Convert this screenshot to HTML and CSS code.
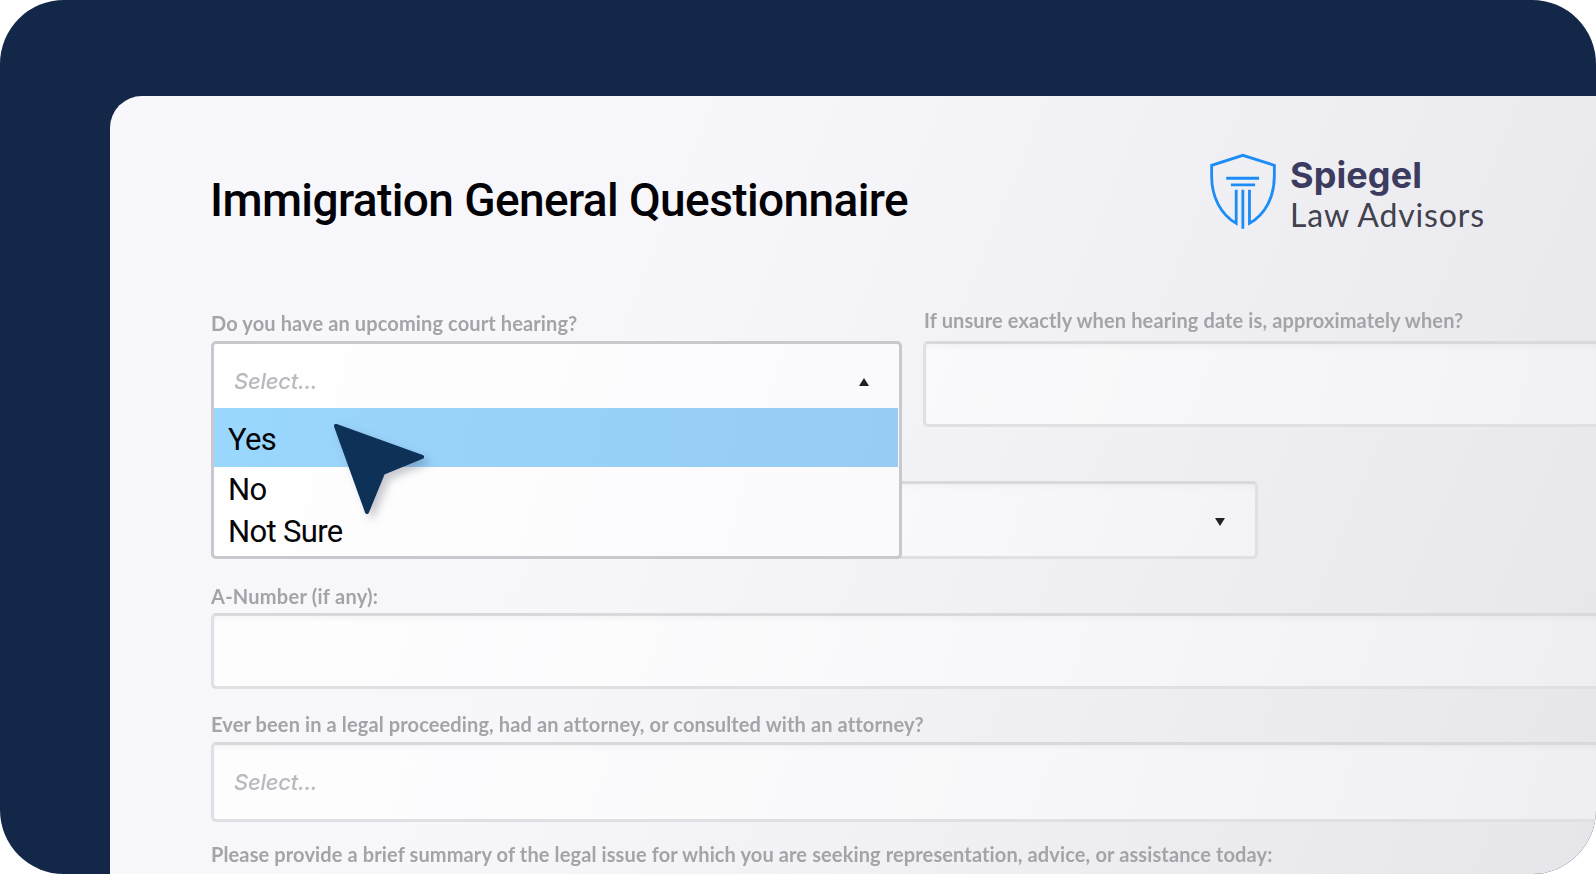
FILE: index.html
```
<!DOCTYPE html>
<html lang="en">
<head>
    <meta charset="UTF-8">
    <meta name="viewport" content="width=device-width, initial-scale=1.0">
    <title>Immigration General Questionnaire</title>
    <link rel="stylesheet" href="styles.css">
</head>
<body>

    <div class="frame">
        <div class="card">
            <div class="header">
                <h1>Immigration General Questionnaire</h1>
                <div class="logo">
                    <svg class="shield" viewBox="80 60 220 250" fill="none" stroke="#1c8df5" stroke-width="8.5">
                        <path d="M168 180V281C122 255 94 202 94 138V106L188 76L283 106V138C283 202 255 255 208 281V180"/>
                        <path d="M188 180V297M138 145H237M152 165H225"/>
                    </svg>
                    <div class="logo-text">
                        <div class="logo-name">Spiegel</div>
                        <div class="logo-sub">Law Advisors</div>
                    </div>
                </div>
            </div>

            <div class="form">
                <div class="row">
                    <div class="group hearing">
                        <div class="label">Do you have an upcoming court hearing?</div>
                        <div class="select open">
                            <span class="placeholder">Select...</span>
                            <svg class="arrow" viewBox="0 0 10 8"><path d="M5 0L10 8H0Z"/></svg>
                            <div class="menu">
                                <div class="option active">Yes</div>
                                <div class="option">No</div>
                                <div class="option">Not Sure</div>
                            </div>
                            <svg class="cursor" viewBox="0 0 100 100">
                                <path d="M2 2L88 33L49 49L33 88Z" fill="#0e3158" stroke="#0e3158" stroke-width="4" stroke-linejoin="round"/>
                            </svg>
                        </div>
                    </div>
                    <div class="group date">
                        <div class="label">If unsure exactly when hearing date is, approximately when?</div>
                        <div class="input"></div>
                    </div>
                </div>

                <div class="select second">
                    <svg class="arrow" viewBox="0 0 10 8"><path d="M0 0H10L5 8Z"/></svg>
                </div>

                <div class="group number">
                    <div class="label">A-Number (if any):</div>
                    <div class="input"></div>
                </div>

                <div class="group attorney">
                    <div class="label">Ever been in a legal proceeding, had an attorney, or consulted with an attorney?</div>
                    <div class="input"><span class="placeholder">Select...</span></div>
                </div>

                <div class="group summary">
                    <div class="label">Please provide a brief summary of the legal issue for which you are seeking representation, advice, or assistance today:</div>
                </div>
            </div>
        </div>
    </div>

</body>
</html>
```
FILE: styles.css
```
* {
    box-sizing: border-box;
}

body {
    margin: 0;
    background: white;
    font-family: Roboto, sans-serif;
    overflow: hidden;
}

.frame {
    width: 1596px;
    height: 874px;
    padding: 96px 0 0 110px;
    background: #132749;
    clip-path: inset(0 round 64px);
}

.card {
    height: 778px;
    padding-left: 101px;
    background: linear-gradient(112deg, #f8f8fc 0%, #f7f7fb 35%, #f1f1f5 60%, #ebebef 82%, #e6e5ea 100%);
    border-top-left-radius: 32px;
    overflow: hidden;
}

.header {
    display: flex;
    height: 210px;
    padding-top: 54px;
}
.header h1 {
    width: 996px;
    margin: 23px 0 0 -1px;
    font-size: 46px;
    font-weight: 500;
    line-height: 54px;
    letter-spacing: -0.6px;
    color: #020206;
    white-space: nowrap;
}

.logo {
    display: flex;
    margin-left: 1px;
}
.shield {
    width: 73px;
    height: 83px;
}
.logo-text {
    padding-left: 10px;
    font-family: Lato, sans-serif;
    color: #3c3b60;
    white-space: nowrap;
}
.logo-name {
    height: 42px;
    font-family: Inter, sans-serif;
    font-size: 36px;
    font-weight: 700;
    line-height: 51px;
    letter-spacing: 0.1px;
}
.logo-sub {
    font-size: 32px;
    line-height: 46px;
    letter-spacing: 0.85px;
    color: #42424f;
}

.row {
    display: flex;
    gap: 21px;
    height: 175px;
}
.hearing {
    width: 691px;
    flex: none;
}
.date {
    flex: 1;
}

.label {
    height: 35px;
    font-family: Lato, sans-serif;
    font-size: 20px;
    font-weight: 700;
    line-height: 35px;
    letter-spacing: 0.12px;
    color: #a3a3a8;
    white-space: nowrap;
    filter: blur(0.6px);
}
.date .label {
    padding-left: 1px;
    line-height: 29px;
}
.number .label {
    line-height: 37px;
    letter-spacing: 0.25px;
}

.input,
.select {
    display: flex;
    align-items: center;
    border: 3px solid #dfdfe4;
    border-top-color: #d8d8dd;
    border-radius: 5px;
    background: linear-gradient(105deg, rgba(255, 255, 255, 0.75), rgba(255, 255, 255, 0.35));
    box-shadow: inset 0 4px 6px -3px rgba(90, 90, 110, 0.08);
}
.input {
    border-right: none;
    border-radius: 5px 0 0 5px;
}
.date .input {
    background: linear-gradient(105deg, rgba(255, 255, 255, 0.6), rgba(255, 255, 255, 0.4));
}

.placeholder {
    padding-left: 20px;
    font-family: Inter, sans-serif;
    font-size: 22px;
    font-weight: 500;
    font-style: italic;
    letter-spacing: -0.25px;
    color: #b9b9be;
    filter: blur(0.5px);
}
.arrow {
    width: 10px;
    height: 8px;
    margin-left: auto;
    fill: #222226;
}

.open {
    position: relative;
    height: 218px;
    padding: 0 30px 0 0;
    align-items: flex-start;
    border-color: #c8c8cd;
    background: linear-gradient(105deg, #ffffff, #faf9fc);
    box-shadow: none;
    z-index: 2;
}
.open .placeholder {
    line-height: 74px;
}
.open .arrow {
    margin-top: 34px;
}
.menu {
    position: absolute;
    top: 64px;
    left: 0;
    right: 1px;
}
.option {
    height: 42px;
    padding-left: 14px;
    font-size: 31px;
    line-height: 42px;
    letter-spacing: -0.65px;
    color: #050508;
}
.option.active {
    height: 59px;
    margin-bottom: 2px;
    line-height: 64px;
    background: linear-gradient(100deg, #99d8fc, #9ad2fa 30%, #97cdf5);
}
.cursor {
    position: absolute;
    left: 120px;
    top: 80px;
    width: 100px;
    height: 100px;
    overflow: visible;
    filter: drop-shadow(5px 5px 4px rgba(30, 40, 60, 0.25));
}

.date .input {
    height: 86px;
}
.second {
    width: 1047px;
    height: 78px;
    padding: 3px 30px 0 0;
}

.number {
    padding-top: 19px;
}
.number .input {
    height: 76px;
}
.attorney {
    padding-top: 18px;
}
.attorney .input {
    height: 80px;
}
.summary {
    padding-top: 15px;
}
```
